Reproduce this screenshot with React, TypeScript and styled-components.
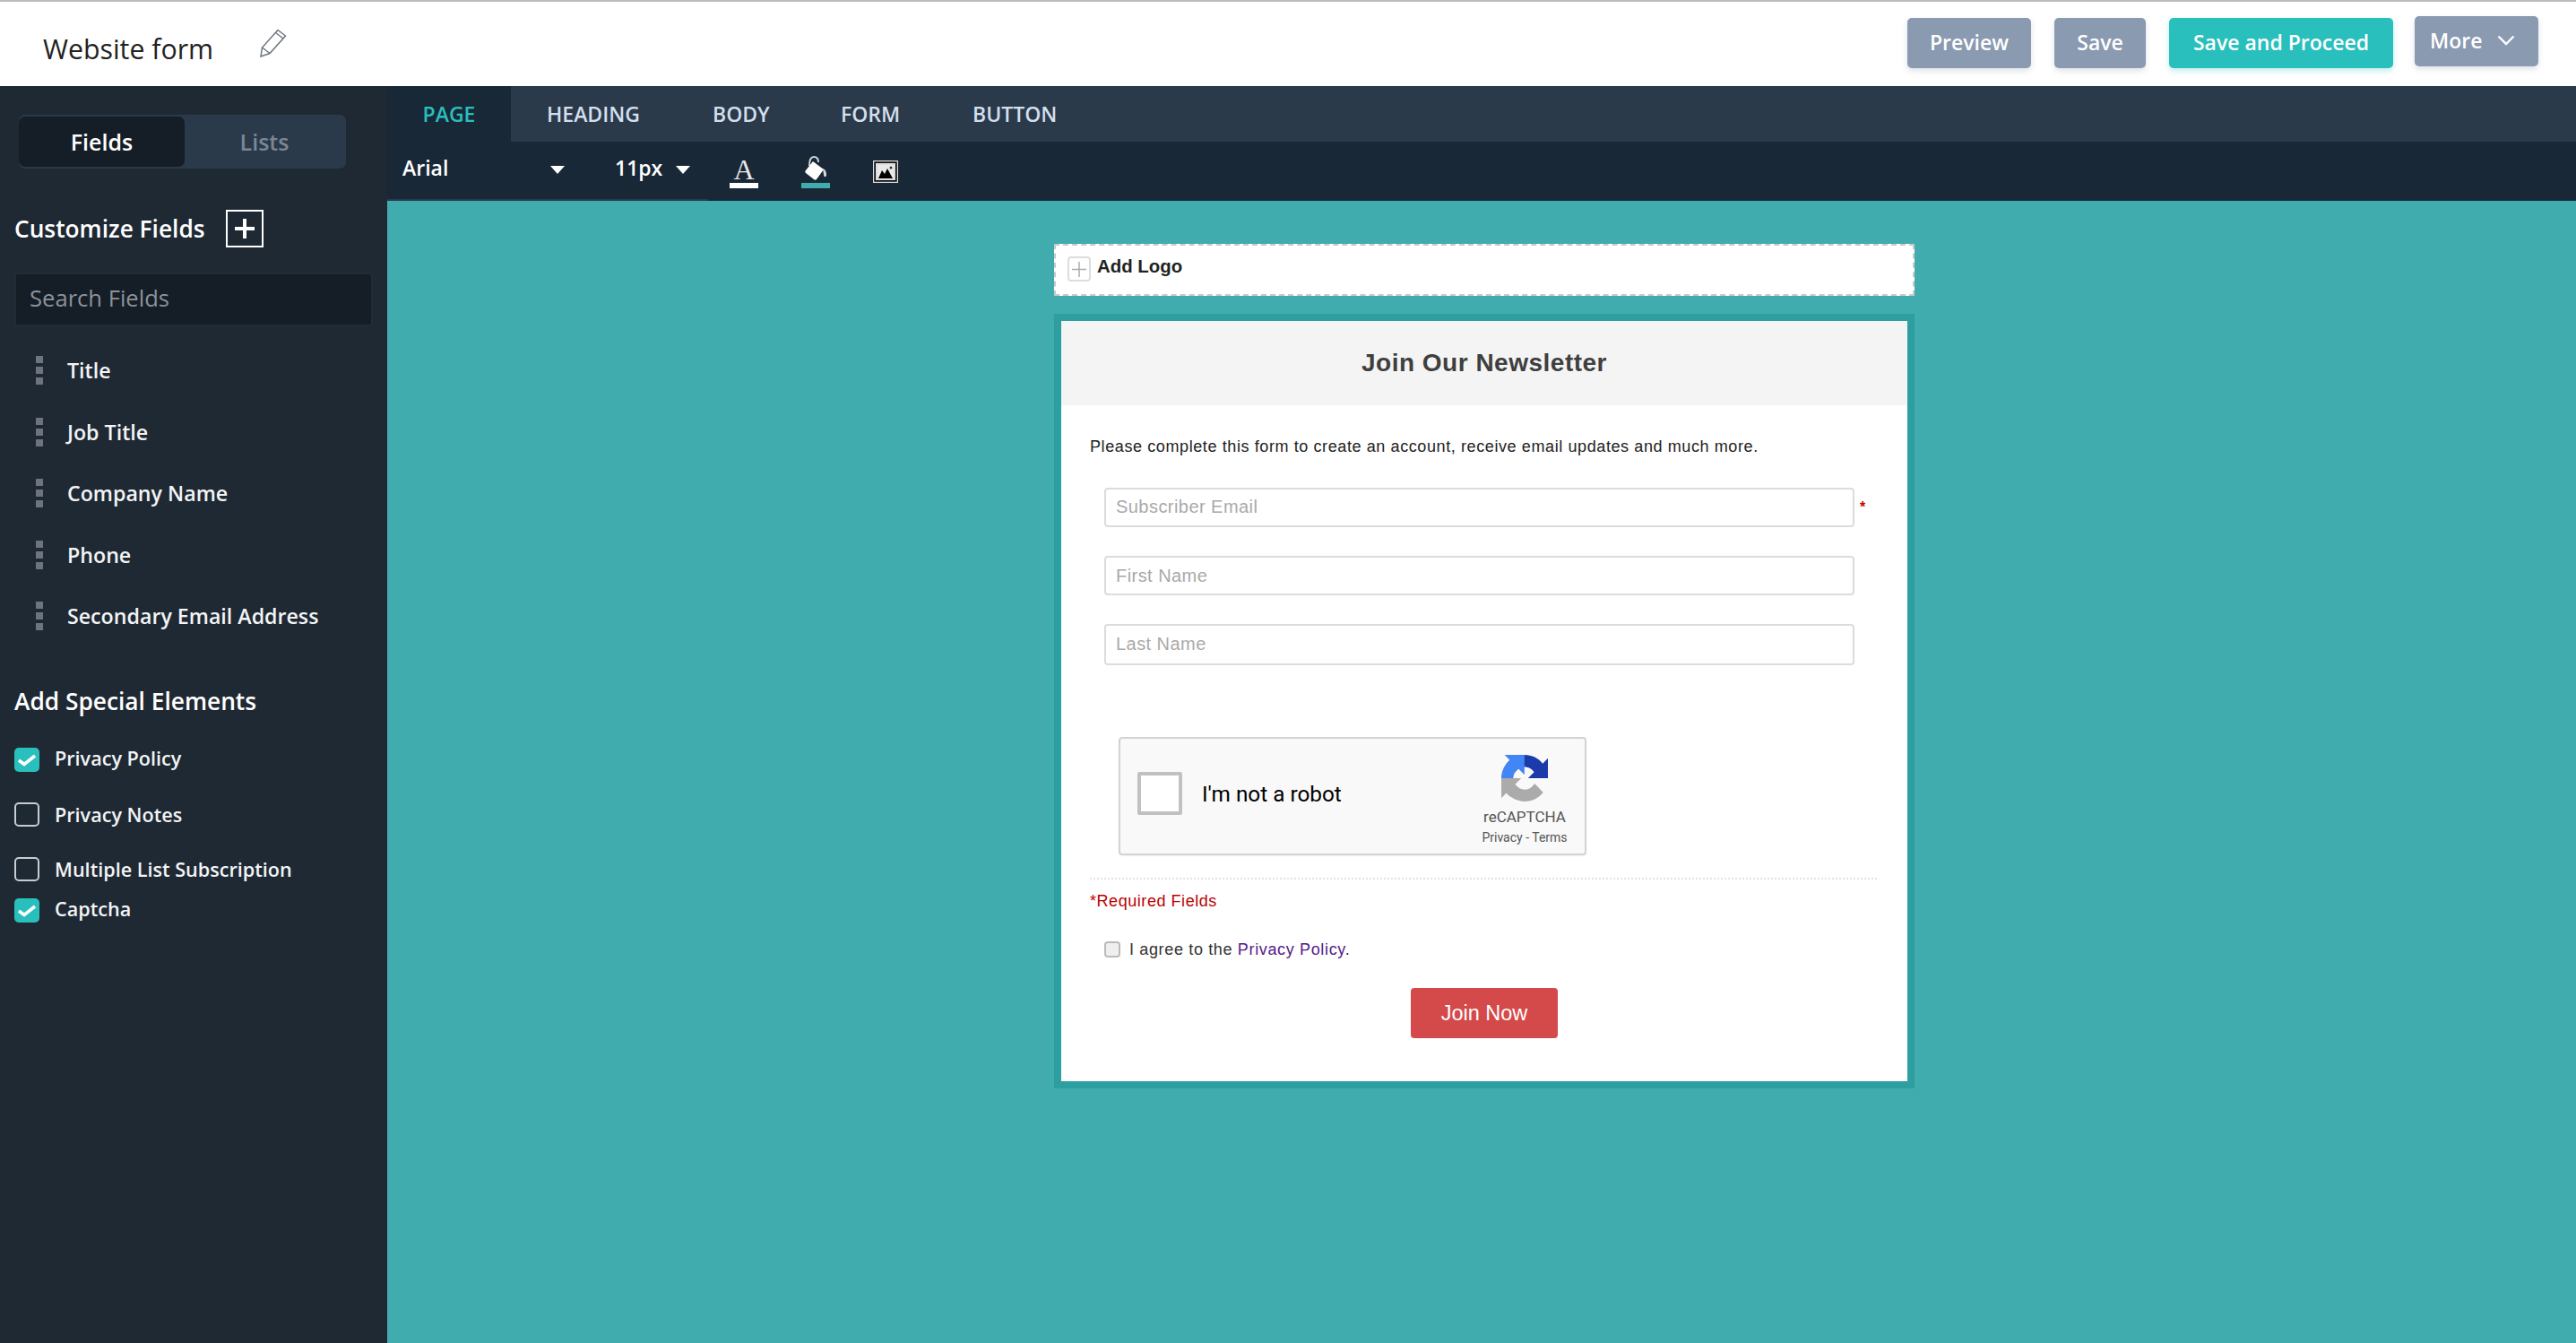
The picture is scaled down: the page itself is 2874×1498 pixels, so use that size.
import React from "react";
import styled, { createGlobalStyle } from "styled-components";

const Global = createGlobalStyle`
  html, body { margin: 0; padding: 0; background: #41acad; }
  * { box-sizing: border-box; }
`;
const OPEN = `"Open Sans", "Noto Sans", sans-serif`;
const ARIAL = `"Liberation Sans", Arial, sans-serif`;

const Page = styled.div`
  width: 2874px; height: 1498px; display: flex; flex-direction: column; overflow: hidden;
  font-family: ${OPEN};
`;
const TopBar = styled.header`
  height: 96px; flex: none; background: #fff; border-top: 2px solid #bcbcbc;
  display: flex; align-items: flex-start; padding: 18px 42px 0 48px;
`;
const FormName = styled.div`
  font-size: 30.3px; line-height: 40px; color: #222; margin-top: 15px; font-weight: 400;
`;
const PencilIcon = styled.svg`
  width: 32px; height: 32px; margin: 12px 0 0 51px; flex: none;
`;
const Actions = styled.div`
  margin-left: auto; display: flex; align-items: flex-start; gap: 26px;
`;
const ActionButton = styled.button<{ $primary?: boolean; $w: number }>`
  width: ${p => p.$w}px; height: 56px; border: 0; border-radius: 5px; color: #fff;
  background: ${p => (p.$primary ? "#29bfbd" : "#8a9ab0")};
  box-shadow: 0 3px 6px ${p => (p.$primary ? "rgba(41,191,189,.3)" : "rgba(138,154,176,.3)")};
  font: 600 23px/54px ${OPEN}; padding: 0 0 2px; text-align: center;
`;
const MoreButton = styled(ActionButton)`
  margin: -2px 0 0 -2px; display: flex; align-items: center; padding: 0 0 2px 17px; gap: 17px;
`;
const Body = styled.div` flex: 1; display: flex; min-height: 0; `;
const Sidebar = styled.aside`
  width: 432px; flex: none; background: #1f2933; color: #fff; padding-top: 32px;
`;
const Segment = styled.div`
  margin-left: 21px; width: 365px; height: 60px; background: #2a3a4b; border-radius: 7px;
  display: flex; align-items: center;
`;
const SegmentItem = styled.div<{ $active?: boolean }>`
  width: ${p => (p.$active ? 185 : 178)}px; height: 56px; border-radius: 7px; text-align: center;
  font: 600 25px/56px ${OPEN}; color: ${p => (p.$active ? "#fff" : "#7c8693")};
  background: ${p => (p.$active ? "#151d26" : "transparent")};
`;
const CustomizeRow = styled.div`
  margin: 46px 0 0 16px; height: 42px; display: flex; align-items: center; gap: 23px;
`;
const SectionTitle = styled.h2`
  margin: 0; font: 600 26.3px/42px ${OPEN}; color: #fff;
`;
const PlusBox = styled.svg` width: 42px; height: 42px; flex: none; `;
const Search = styled.div`
  margin: 28px 0 0 16px; width: 400px; height: 60px; background: #151d26;
  border: 2px solid #232c35; border-radius: 3px; padding-left: 15px;
  font: 400 25.6px/54px ${OPEN}; color: #8b929a;
`;
const FieldList = styled.div` margin-top: 15px; `;
const FieldRow = styled.div`
  height: 68.5px; display: flex; align-items: center; padding-left: 40px; gap: 27px;
  font: 600 23.2px/30px ${OPEN}; color: #f2f4f6;
`;
const Handle = styled.span`
  width: 8px; height: 32px; flex: none;
  background: repeating-linear-gradient(#6d747d 0 8px, transparent 8px 12px);
`;
const SpecialTitle = styled(SectionTitle)`
  margin: 44px 0 0 16px; line-height: 32px;
`;
const CheckRow = styled.label<{ $tight?: boolean; $first?: boolean }>`
  display: flex; align-items: center; height: 30px; padding-left: 16px; gap: 17px;
  margin-top: ${p => (p.$first ? 35 : p.$tight ? 16 : 31)}px;
  font: 600 21.6px/30px ${OPEN}; color: #f2f4f6;
`;
const CheckLabel = styled.span<{ $raised?: boolean }>`
  padding-bottom: ${p => (p.$raised ? 4 : 0)}px;
`;
const CheckBox = styled.span<{ $on?: boolean }>`
  width: 28px; height: 27px; border-radius: 5px; flex: none; display: flex;
  align-items: center; justify-content: center;
  background: ${p => (p.$on ? "#29bfbd" : "transparent")};
  border: ${p => (p.$on ? "0" : "2px solid #c8ccd0")};
`;
const Main = styled.main` flex: 1; display: flex; flex-direction: column; min-width: 0; `;
const Tabs = styled.nav`
  height: 62px; flex: none; background: #2a3a4b; display: flex; align-items: stretch;
`;
const Tab = styled.div<{ $active?: boolean; $w: number; $ml?: number }>`
  width: ${p => p.$w}px; margin-left: ${p => p.$ml ?? 0}px; text-align: center; white-space: nowrap;
  font: 600 23px/62px ${OPEN};
  color: ${p => (p.$active ? "#29bfbd" : "#d3dfec")};
  background: ${p => (p.$active ? "#192837" : "transparent")};
`;
const Toolbar = styled.div`
  height: 66px; flex: none; background: #192837; display: flex; padding-left: 17px; position: relative;
  color: #fff;
  &::after {
    content: ""; position: absolute; left: 0; bottom: 0; width: 358px; height: 2px; background: #2a3a4b;
  }
`;
const ToolText = styled.div<{ $w: number; $ml?: number }>`
  width: ${p => p.$w}px; margin-left: ${p => p.$ml ?? 0}px; height: 58px; display: flex;
  align-items: center; justify-content: space-between; font: 600 23px/30px ${OPEN};
`;
const Caret = styled.span`
  width: 0; height: 0; border-left: 8px solid transparent; border-right: 8px solid transparent;
  border-top: 9px solid #fff; margin-top: 5px;
`;
const ToolIcon = styled.div<{ $bar: string; $ml: number }>`
  width: 32px; margin-left: ${p => p.$ml}px; padding-top: 16px; display: flex; flex-direction: column;
  align-items: center;
  &::after { content: ""; width: 32px; height: 6px; background: ${p => p.$bar}; }
`;
const IconArea = styled.div`
  height: 30px; display: flex; align-items: flex-start; justify-content: center;
`;
const SerifA = styled.span`
  font: 400 32px/30px "Liberation Serif", serif; color: #e8e8e8;
`;
const PlainIcon = styled.svg` width: 28px; height: 25px; margin: 21px 0 0 48px; flex: none; `;
const Canvas = styled.div`
  flex: 1; background: #41acad; padding: 48px 0 0 6px; display: flex; flex-direction: column;
  align-items: center; font-family: ${ARIAL};
`;
const LogoBox = styled.div`
  width: 960px; height: 58px; background: #fff; border: 2px dashed #c9c9c9; display: flex;
  align-items: flex-start; padding: 10px 0 0 13px; gap: 7px; color: #222;
  font: 700 20.400px/26px ${ARIAL};
`;
const LogoPlus = styled.svg` width: 26px; height: 28px; flex: none; margin-top: 2px; `;
const FormCard = styled.section`
  width: 960px; height: 864px; margin-top: 20px; background: #fff; border: 8px solid #2e9fa0;
`;
const FormHead = styled.h1`
  margin: 0; height: 94px; background: #f4f4f4; text-align: center; color: #3f3f3f;
  font: 700 28px/93px ${ARIAL}; letter-spacing: 0.5px;
`;
const Intro = styled.p`
  margin: 34px 32px 0; font: 400 18px/24px ${ARIAL}; color: #222; letter-spacing: 0.6px;
`;
const Fields = styled.div`
  margin: 34px 0 0 48px; display: flex; flex-direction: column; gap: 32px;
`;
const FieldLine = styled.div` display: flex; align-items: flex-start; gap: 6px; `;
const TextField = styled.div<{ $tall?: boolean; $lh: number }>`
  width: 837px; height: ${p => (p.$tall ? 46 : 44)}px; border: 2px solid #dcdcdc; border-radius: 4px;
  padding-left: 11px; color: #a9a9a9; font: 400 20px/${p => p.$lh}px ${ARIAL}; letter-spacing: 0.45px;
`;
const Star = styled.span` color: #c00; font: 700 16px/26px ${ARIAL}; margin-top: 9px; `;
const Captcha = styled.div`
  width: 522px; height: 132px; margin: 80px 0 0 64px; background: #f9f9f9; border: 2px solid #d3d3d3;
  border-radius: 4px; box-shadow: 0 1px 2px rgba(0,0,0,.06); display: flex; padding: 37px 0 0 19px;
  font-family: Roboto, ${ARIAL};
`;
const CaptchaBox = styled.div`
  width: 50px; height: 48px; background: #fff; border: 4px solid #c1c1c1; border-radius: 2px; flex: none;
`;
const CaptchaText = styled.div`
  margin-left: 22px; font: 400 24.300px/50px Roboto, ${ARIAL}; color: #000;
`;
const CaptchaBrand = styled.div`
  margin: -19px 0 0 auto; width: 122px; padding-right: 12px; display: flex; flex-direction: column; align-items: center;
  color: #555; font: 400 17px/22px Roboto, ${ARIAL};
`;
const CaptchaLogo = styled.svg` width: 52px; height: 52px; `;
const CaptchaName = styled.div` margin-top: 6px; `;
const CaptchaLinks = styled.div` font-size: 14px; line-height: 24px; white-space: nowrap; `;
const Rule = styled.div`
  margin: 25px 32px 0; height: 2px;
  background: repeating-linear-gradient(90deg, #e2e2e2 0 2px, transparent 2px 4px);
`;
const Required = styled.div`
  margin: 12px 0 0 32px; color: #bb0000; font: 400 18px/24px ${ARIAL}; letter-spacing: 0.55px;
`;
const Agree = styled.div`
  margin: 30px 0 0 48px; display: flex; align-items: center; gap: 10px; color: #333;
  font: 400 18px/24px ${ARIAL}; letter-spacing: 0.65px;
`;
const AgreeBox = styled.span`
  width: 18px; height: 18px; border: 2px solid #bbb; border-radius: 4px; background: #efefef;
`;
const PolicyLink = styled.span` color: #551a8b; `;
const JoinWrap = styled.div` margin-top: 31px; display: flex; justify-content: center; `;
const JoinButton = styled.button`
  width: 164px; height: 56px; border: 0; border-radius: 4px; background: #d44a4a; color: #fff;
  font: 400 23.500px/56px ${ARIAL}; padding: 0;
`;

const Check = () => (
  <svg width="22" height="15" viewBox="0 0 22 15">
    <path d="M2 8l6 4.500L20 3" fill="none" stroke="#fff" strokeWidth="3.600" />
  </svg>
);

const fields = ["Title", "Job Title", "Company Name", "Phone", "Secondary Email Address"];

export default function App() {
  return (
    <Page>
      <Global />
      <TopBar>
        <FormName>Website form</FormName>
        <PencilIcon viewBox="0 0 32 32" fill="none" stroke="#6f7782" strokeWidth="1.500">
          <path d="M2 31l1.500-10L21 1.500l8.500 6.500L12 27.500z" />
          <path d="M3.500 21l8.500 6.500M18.500 4.500l8.500 6.500" />
        </PencilIcon>
        <Actions>
          <ActionButton $w={138}>Preview</ActionButton>
          <ActionButton $w={102}>Save</ActionButton>
          <ActionButton $w={250} $primary>Save and Proceed</ActionButton>
          <MoreButton $w={138}>
            More
            <svg width="20" height="12" viewBox="0 0 20 12">
              <path d="M1.500 1.500L10 10l8.500-8.500" fill="none" stroke="#fff" strokeWidth="2.400" />
            </svg>
          </MoreButton>
        </Actions>
      </TopBar>
      <Body>
        <Sidebar>
          <Segment>
            <SegmentItem $active>Fields</SegmentItem>
            <SegmentItem>Lists</SegmentItem>
          </Segment>
          <CustomizeRow>
            <SectionTitle>Customize Fields</SectionTitle>
            <PlusBox viewBox="0 0 42 42">
              <rect x="1" y="1" width="40" height="40" fill="none" stroke="#fff" strokeWidth="2" />
              <path d="M21 10v22M10 21h22" stroke="#fff" strokeWidth="4" />
            </PlusBox>
          </CustomizeRow>
          <Search>Search Fields</Search>
          <FieldList>
            {fields.map(f => (
              <FieldRow key={f}>
                <Handle />
                {f}
              </FieldRow>
            ))}
          </FieldList>
          <SpecialTitle>Add Special Elements</SpecialTitle>
          <CheckRow $first>
            <CheckBox $on><Check /></CheckBox>
            <CheckLabel $raised>Privacy Policy</CheckLabel>
          </CheckRow>
          <CheckRow>
            <CheckBox />
            <CheckLabel>Privacy Notes</CheckLabel>
          </CheckRow>
          <CheckRow>
            <CheckBox />
            <CheckLabel>Multiple List Subscription</CheckLabel>
          </CheckRow>
          <CheckRow $tight>
            <CheckBox $on><Check /></CheckBox>
            <CheckLabel $raised>Captcha</CheckLabel>
          </CheckRow>
        </Sidebar>
        <Main>
          <Tabs>
            <Tab $active $w={138}>PAGE</Tab>
            <Tab $w={104} $ml={40}>HEADING</Tab>
            <Tab $w={63} $ml={81}>BODY</Tab>
            <Tab $w={66} $ml={80}>FORM</Tab>
            <Tab $w={93} $ml={81}>BUTTON</Tab>
          </Tabs>
          <Toolbar>
            <ToolText $w={181}>Arial<Caret /></ToolText>
            <ToolText $w={84} $ml={56}>11px<Caret /></ToolText>
            <ToolIcon $bar="#fff" $ml={44}>
              <IconArea><SerifA>A</SerifA></IconArea>
            </ToolIcon>
            <ToolIcon $bar="#41acad" $ml={48}>
              <IconArea>
                <svg width="28" height="28" viewBox="0 0 28 28">
                  <path d="M7 11C7 4 9 1 12 1s5 2 5 6" fill="none" stroke="#cfd3d6" strokeWidth="2" />
                  <path d="M11 6l12 9-8 11c-1 1-2 1-3 0L3 19c-1-1-1-2 0-3z" fill="#fff" />
                  <path d="M22 14c3 1 4 4 4 7 0 3-3 3-3 0z" fill="#d8dadc" />
                </svg>
              </IconArea>
            </ToolIcon>
            <PlainIcon viewBox="0 0 28 25">
              <rect x="0.500" y="0.500" width="27" height="24" fill="#111" stroke="#ddd" strokeWidth="1.500" />
              <rect x="3" y="3" width="22" height="19" fill="#ddd" />
              <rect x="5" y="5" width="18" height="15" fill="#e9e9e9" />
              <path d="M6 20l4-9 3 4 3-6 6 11z" fill="#000" />
              <circle cx="20" cy="8" r="1.500" fill="#333" />
            </PlainIcon>
          </Toolbar>
          <Canvas>
            <LogoBox>
              <LogoPlus viewBox="0 0 26 28">
                <rect x="1" y="1" width="24" height="26" rx="3" fill="none" stroke="#ddd" strokeWidth="2" />
                <path d="M13 6v17M5 14.500h16" stroke="#aaa" strokeWidth="1.500" />
              </LogoPlus>
              Add Logo
            </LogoBox>
            <FormCard>
              <FormHead>Join Our Newsletter</FormHead>
              <Intro>Please complete this form to create an account, receive email updates and much more.</Intro>
              <Fields>
                <FieldLine>
                  <TextField $lh={39}>Subscriber Email</TextField>
                  <Star>*</Star>
                </FieldLine>
                <FieldLine><TextField $lh={41}>First Name</TextField></FieldLine>
                <FieldLine><TextField $tall $lh={41}>Last Name</TextField></FieldLine>
              </Fields>
              <Captcha>
                <CaptchaBox />
                <CaptchaText>I'm not a robot</CaptchaText>
                <CaptchaBrand>
                  <CaptchaLogo viewBox="0 0 64 64">
                    <path d="M64 31.955l-.033-1.37V4.687l-7.16 7.16C50.948 4.674 42.033.093 32.05.093c-10.4 0-19.622 4.96-25.458 12.64l11.736 11.86a15.55 15.55 0 0 1 4.754-5.334c2.05-1.6 4.952-2.906 8.968-2.906.485 0 .86.057 1.135.163 4.976.393 9.288 3.14 11.828 7.124l-8.307 8.307c10.52-.04 22.404-.066 27.295.004" fill="#1c3aa9" />
                    <path d="M31.862.094l-1.37.033H4.594l7.16 7.16C4.58 13.147 0 22.06 0 32.046c0 10.4 4.96 19.622 12.64 25.458L24.5 45.768a15.55 15.55 0 0 1-5.334-4.754c-1.6-2.05-2.906-4.952-2.906-8.968 0-.485.057-.86.163-1.135.393-4.976 3.14-9.288 7.124-11.828l8.307 8.307c-.04-10.52-.066-22.404.004-27.295" fill="#4285f4" />
                    <path d="M.001 32.045l.033 1.37V59.3l7.16-7.16c5.86 7.173 14.774 11.754 24.76 11.754 10.4 0 19.622-4.96 25.458-12.64L45.676 39.4a15.55 15.55 0 0 1-4.754 5.334c-2.05 1.6-4.952 2.906-8.968 2.906-.485 0-.86-.057-1.135-.163-4.976-.393-9.288-3.14-11.828-7.124l8.307-8.307c-10.52.04-22.404.066-27.295-.004" fill="#ababab" />
                  </CaptchaLogo>
                  <CaptchaName>reCAPTCHA</CaptchaName>
                  <CaptchaLinks>Privacy - Terms</CaptchaLinks>
                </CaptchaBrand>
              </Captcha>
              <Rule />
              <Required>*Required Fields</Required>
              <Agree>
                <AgreeBox />
                <span>I agree to the <PolicyLink>Privacy Policy</PolicyLink>.</span>
              </Agree>
              <JoinWrap><JoinButton>Join Now</JoinButton></JoinWrap>
            </FormCard>
          </Canvas>
        </Main>
      </Body>
    </Page>
  );
}
